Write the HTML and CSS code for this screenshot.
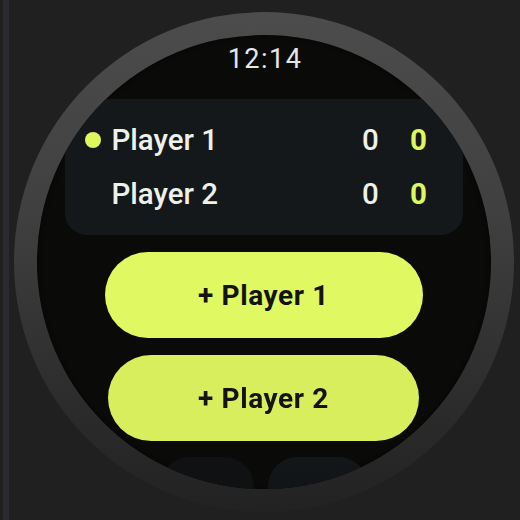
FILE: index.html
```html
<!DOCTYPE html>
<html>
<head>
<meta charset="utf-8">
<link rel="stylesheet" href="styles.css">
</head>
<body>
<div class="rail"></div>
<div class="watch">
  <div class="screen">
    <div class="time">12:14</div>
    <div class="card">
      <div class="row">
        <span class="dot"></span>
        <span class="name">Player 1</span>
        <span class="score">0</span>
        <span class="score accent">0</span>
      </div>
      <div class="row">
        <span class="dot hidden"></span>
        <span class="name">Player 2</span>
        <span class="score">0</span>
        <span class="score accent">0</span>
      </div>
    </div>
    <button class="btn">+ Player 1</button>
    <button class="btn btn-far">+ Player 2</button>
    <div class="chips">
      <div class="chip"></div>
      <div class="chip chip-light"></div>
    </div>
  </div>
</div>
</body>
</html>
```
FILE: styles.css
```css
html, body {
  margin: 0;
  padding: 0;
}
body {
  width: 520px;
  height: 520px;
  overflow: hidden;
  background: #202020;
  display: flex;
  align-items: flex-start;
  font-family: Roboto, "Noto Sans", sans-serif;
}
.rail {
  width: 6px;
  height: 520px;
  margin-left: 3px;
  background: #2a2b2e;
  flex: none;
}
.watch {
  flex: none;
  width: 500px;
  height: 500px;
  margin-left: 5px;
  margin-top: 12px;
  border-radius: 50%;
  background: linear-gradient(180deg, #4c4c4c 0%, #404040 40%, #2c2c2c 78%, #222222 100%);
  padding: 23px;
  box-sizing: border-box;
}
.screen {
  width: 454px;
  height: 454px;
  border-radius: 50%;
  background: #0a0b09;
  overflow: hidden;
  display: flex;
  flex-direction: column;
  align-items: center;
  position: relative;
  box-shadow: inset 0 0 4px rgba(0,0,0,0.7);
}
.time {
  margin-top: 11px;
  height: 27px;
  line-height: 27px;
  font-size: 27px;
  letter-spacing: 1.5px;
  color: #e6e6e6;
  font-weight: 400;
  padding-left: 2px;
}
.card {
  margin-top: 26px;
  width: 398px;
  box-sizing: border-box;
  padding: 14px 34px 14px 20px;
  background: #15181b;
  border-radius: 22px;
  margin-left: -1px;
}
.row {
  display: flex;
  align-items: center;
  height: 54px;
}
.dot {
  width: 16px;
  height: 16px;
  border-radius: 50%;
  background: #def75c;
  margin-right: 11px;
  flex: none;
}
.dot.hidden {
  visibility: hidden;
}
.name {
  flex: 1;
  font-size: 29.5px;
  line-height: 54px;
  font-weight: 500;
  color: #eef0ea;
}
.score {
  width: 20px;
  text-align: center;
  font-size: 29.5px;
  line-height: 54px;
  font-weight: 500;
  color: #eef0ea;
}
.score.accent {
  margin-left: 28px;
  color: #def75c;
  font-weight: 700;
}
.btn {
  margin-top: 17px;
  width: 318px;
  height: 86px;
  border: none;
  border-radius: 43px;
  background: #e0f963;
  color: #131412;
  font-family: Roboto, "Noto Sans", sans-serif;
  font-size: 28px;
  font-weight: 700;
  letter-spacing: 0.6px;
  padding: 0;
  margin-left: -1px;
  flex: none;
}
.btn-far {
  width: 311px;
  background: #d9ee5c;
  filter: blur(0.4px);
}
.chips {
  margin-top: 16px;
  display: flex;
  gap: 14px;
  flex: none;
}
.chip {
  width: 94px;
  height: 70px;
  border-radius: 30px;
  background: #0f1113;
}
.chip-light {
  width: 100px;
  background: linear-gradient(180deg, #14171a, #0e1012);
}
```
